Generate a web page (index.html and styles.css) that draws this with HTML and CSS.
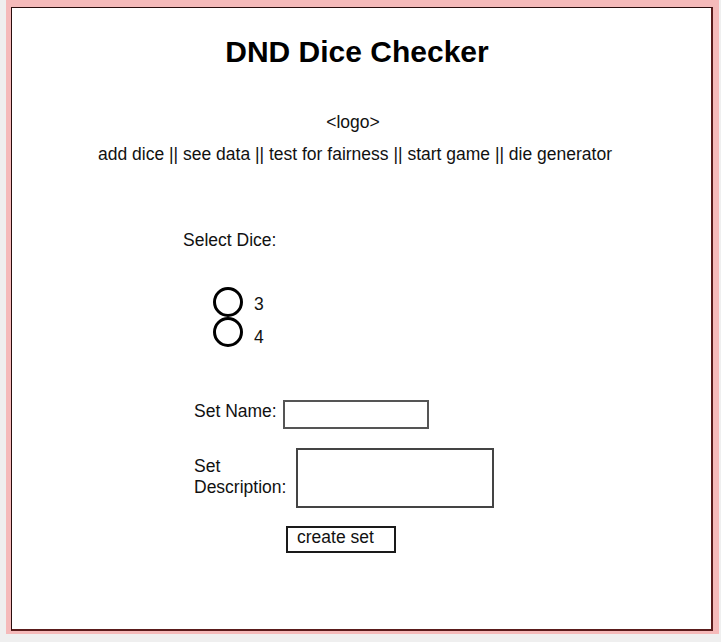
FILE: index.html
```html
<!DOCTYPE html>
<html lang="en">
<head>
<meta charset="utf-8">
<title>DND Dice Checker</title>
<link rel="stylesheet" href="styles.css">
</head>
<body>
<div class="frame">
  <div class="page">
    <header class="header">
      <h1 class="title">DND Dice Checker</h1>
      <div class="logo">&lt;logo&gt;</div>
      <nav class="nav">add dice || see data || test for fairness || start game || die generator</nav>
    </header>
    <section class="form">
      <div class="select-label">Select Dice:</div>
      <div class="dice">
        <div class="rings">
          <span class="ring"></span>
          <span class="ring"></span>
        </div>
        <div class="die-labels">
          <div>3</div>
          <div>4</div>
        </div>
      </div>
      <div class="field name-field">
        <span class="field-label">Set Name:</span>
        <span class="input"></span>
      </div>
      <div class="field desc-field">
        <span class="field-label desc-label">Set<br>Description:</span>
        <span class="textarea"></span>
      </div>
      <div class="button">create set</div>
    </section>
  </div>
</div>
</body>
</html>
```

FILE: styles.css
```css
html, body {
  margin: 0;
  padding: 0;
}

body {
  background: #efefef;
  font-family: "Liberation Sans", Arial, sans-serif;
  color: #000;
}

.frame {
  margin-left: 6px;
  width: 713px;
  height: 634px;
  box-sizing: border-box;
  padding: 7px 6px 3px 5px;
  background: #f5baba;
}

.page {
  box-sizing: border-box;
  height: 624px;
  background: #fff;
  border-top: 1px solid #2a0d0d;
  border-left: 1px solid #2a0d0d;
  border-right: 2px solid #5a1b1b;
  border-bottom: 2px solid #5a1b1b;
  padding-top: 26px;
}

.header {
  padding-right: 13px;
  text-align: center;
}

.title {
  margin: 0;
  padding-left: 4px;
  font-size: 30px;
  line-height: 35px;
  font-weight: bold;
}

.logo {
  margin-top: 43px;
  padding-right: 4px;
  font-size: 17.5px;
  line-height: 20px;
  color: #111;
}

.nav {
  margin-top: 12px;
  font-size: 17.5px;
  line-height: 20px;
  color: #111;
}

.form {
  font-size: 17.5px;
  line-height: 20px;
  color: #111;
}

.select-label {
  margin-top: 66px;
  padding-left: 171px;
}

.dice {
  display: flex;
  align-items: flex-start;
  height: 60px;
  margin-top: 37px;
  padding-left: 201px;
}

.rings {
  display: flex;
  flex-direction: column;
}

.ring {
  display: block;
  width: 30px;
  height: 30px;
  box-sizing: border-box;
  border: 3px solid #000;
  border-radius: 50%;
}

.die-labels {
  margin-left: 11px;
  margin-top: 1px;
  line-height: 33px;
}

.field {
  display: flex;
  align-items: flex-start;
  padding-left: 182px;
}

.name-field {
  margin-top: 53px;
}

.name-field .field-label {
  margin-top: 1px;
  margin-right: 6px;
}

.input {
  display: block;
  width: 146px;
  height: 29px;
  box-sizing: border-box;
  border: 2px solid #555;
}

.desc-field {
  margin-top: 19px;
}

.desc-label {
  margin-top: 8px;
  margin-right: 10px;
  line-height: 21px;
}

.textarea {
  display: block;
  width: 198px;
  height: 60px;
  box-sizing: border-box;
  border: 2px solid #444;
}

.button {
  margin-top: 18px;
  margin-left: 274px;
  width: 110px;
  height: 27px;
  box-sizing: border-box;
  border: 2px solid #1a1a1a;
  padding-left: 9px;
  line-height: 19px;
  color: #111;
}
```
